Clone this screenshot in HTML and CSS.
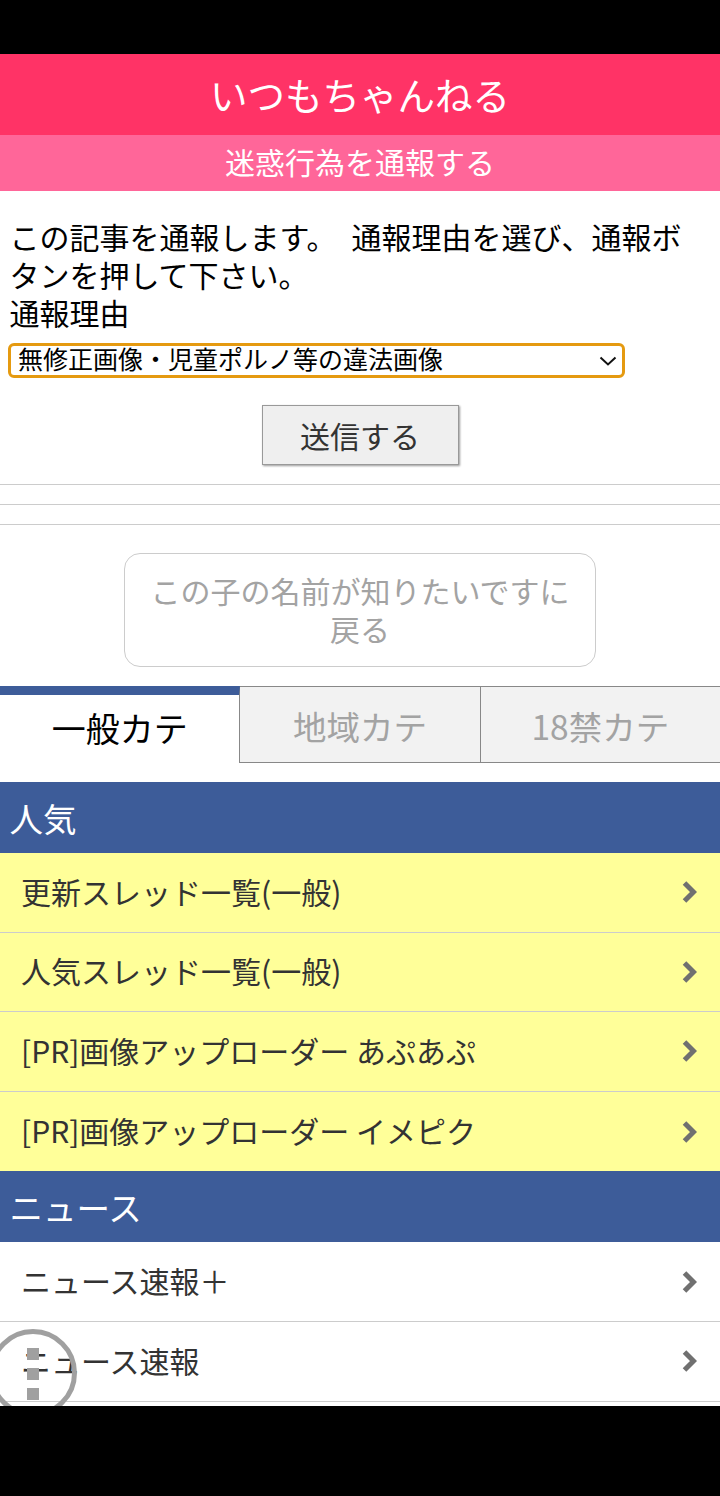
FILE: index.html
```html
<!DOCTYPE html>
<html lang="ja">
<head>
	<title>いつもちゃんねる</title>
	<meta charset="utf-8">
	<meta name="viewport" content="width=device-width, initial-scale=1">
	<link rel="stylesheet" href="styles.css">
</head>
<body>
	<div class="status-bar"></div>
	<div class="screen">
		<h1 class="site-title">いつもちゃんねる</h1>
		<h2 class="page-title">迷惑行為を通報する</h2>
		<form class="report">
			<p>この記事を通報します。　通報理由を選び、通報ボタンを押して下さい。</p>
			<div id="reason-label">通報理由</div>
			<div class="select" role="combobox" aria-labelledby="reason-label">
				<span>無修正画像・児童ポルノ等の違法画像</span>
				<svg class="select-arrow" width="18" height="10" viewBox="0 0 18 10"><path d="M1.5 1.5 9 8.5l7.5-7" fill="none" stroke="#111" stroke-width="2"/></svg>
			</div>
			<div class="submit-row">
				<button type="button">送信する</button>
			</div>
		</form>
		<div class="rules">
			<hr>
			<hr>
			<hr>
		</div>
		<a class="back">この子の名前が知りたいですに戻る</a>
		<div class="tabs">
			<div class="tab active">一般カテ</div>
			<div class="tab">地域カテ</div>
			<div class="tab">18禁カテ</div>
		</div>
		<h3 class="section">人気</h3>
		<ul class="list yellow">
			<li>更新スレッド一覧(一般)<svg class="chev" width="15" height="24" viewBox="0 0 15 24"><path d="M2.5 3l9 9-9 9" fill="none" stroke="#707070" stroke-width="5"/></svg></li>
			<li>人気スレッド一覧(一般)<svg class="chev" width="15" height="24" viewBox="0 0 15 24"><path d="M2.5 3l9 9-9 9" fill="none" stroke="#707070" stroke-width="5"/></svg></li>
			<li>[PR]画像アップローダー あぷあぷ<svg class="chev" width="15" height="24" viewBox="0 0 15 24"><path d="M2.5 3l9 9-9 9" fill="none" stroke="#707070" stroke-width="5"/></svg></li>
			<li>[PR]画像アップローダー イメピク<svg class="chev" width="15" height="24" viewBox="0 0 15 24"><path d="M2.5 3l9 9-9 9" fill="none" stroke="#707070" stroke-width="5"/></svg></li>
		</ul>
		<h3 class="section">ニュース</h3>
		<ul class="list">
			<li>ニュース速報＋<svg class="chev" width="15" height="24" viewBox="0 0 15 24"><path d="M2.5 3l9 9-9 9" fill="none" stroke="#707070" stroke-width="5"/></svg></li>
			<li>ニュース速報<svg class="chev" width="15" height="24" viewBox="0 0 15 24"><path d="M2.5 3l9 9-9 9" fill="none" stroke="#707070" stroke-width="5"/></svg></li>
		</ul>
		<div class="float-menu">
			<span></span>
			<span></span>
			<span></span>
		</div>
	</div>
	<div class="nav-bar"></div>
</body>
</html>
```

FILE: styles.css
```css
* {
	box-sizing: border-box;
}

html, body {
	margin: 0;
	padding: 0;
	height: 100%;
}

body {
	display: flex;
	flex-direction: column;
	background-color: #000;
	font-family: "Noto Sans CJK JP", "Noto Sans", sans-serif;
}

.status-bar {
	height: 54px;
	flex: none;
}

.nav-bar {
	height: 90px;
	flex: none;
}

.screen {
	position: relative;
	flex: 1;
	overflow: hidden;
	background-color: #fff;
}

.site-title {
	margin: 0;
	height: 81px;
	line-height: 80px;
	text-align: center;
	font-size: 37.5px;
	font-weight: 400;
	color: #fff;
	background-color: #ff3366;
}

.page-title {
	margin: 0;
	height: 56px;
	line-height: 53px;
	text-align: center;
	font-size: 30px;
	font-weight: 400;
	color: #fff;
	background-color: #ff6699;
}

.report {
	padding: 26px 9.5px 0;
	font-size: 30px;
	line-height: 38px;
	color: #000;
}

.report p {
	margin: 0;
}

.select {
	display: flex;
	align-items: center;
	justify-content: space-between;
	width: 617px;
	height: 35px;
	margin: 12px 0 0 -1.5px;
	padding: 0 5px 5px 7px;
	border: 3px solid #e59a10;
	border-radius: 6px;
	background-color: #fff;
	font-size: 25px;
	line-height: 26px;
}

.select-arrow {
	flex: none;
	margin-top: 5px;
}

.submit-row {
	display: flex;
	justify-content: center;
	margin-top: 27px;
}

.submit-row button {
	width: 197px;
	height: 60px;
	padding: 0;
	border: 1px solid #999;
	background-color: #efefef;
	box-shadow: 1px 1px 2px rgba(0,0,0,0.4);
	color: #333;
	font-family: inherit;
	font-size: 30px;
}

.rules {
	display: flex;
	flex-direction: column;
	gap: 19px;
	margin-top: 19px;
}

.rules hr {
	margin: 0;
	height: 1px;
	border: none;
	background-color: #ccc;
}

.back {
	display: block;
	width: 472px;
	margin: 28px auto 0;
	padding: 17px 20px 19px;
	border: 1px solid #ccc;
	border-radius: 16px;
	text-align: center;
	font-size: 30px;
	line-height: 38px;
	color: #a3a3a3;
}

.tabs {
	display: flex;
	margin-top: 19px;
	height: 77px;
}

.tab {
	flex: 1;
	display: flex;
	align-items: center;
	justify-content: center;
	padding-top: 2px;
	border: 1px solid #888;
	border-left: none;
	background-color: #f2f2f2;
	font-size: 33.5px;
	color: #a3a3a3;
}

.tab:last-child {
	border-right: none;
}

.tab.active {
	padding: 0 0 4px;
	border: none;
	border-top: 9px solid #3d5c99;
	border-right: 1px solid #888;
	background-color: #fff;
	font-size: 34px;
	color: #000;
}

.section {
	margin: 19px 0 0;
	height: 71px;
	line-height: 71px;
	padding-left: 9.5px;
	font-size: 33.5px;
	font-weight: 400;
	color: #fff;
	background-color: #3d5c99;
}

.list + .section {
	margin-top: 0;
}

.list {
	margin: 0;
	padding: 0;
	list-style: none;
}

.list li {
	display: flex;
	align-items: center;
	justify-content: space-between;
	height: 79.6px;
	padding: 0 23px 3px 21px;
	border-bottom: 1px solid #ccc;
	font-size: 30px;
	color: #333;
}

.list.yellow li {
	background-color: #ffff99;
}

.list.yellow li:last-child {
	border-bottom: none;
}

.chev {
	flex: none;
	margin-top: 3px;
}

.float-menu {
	position: absolute;
	left: -11px;
	top: 1275px;
	width: 88px;
	height: 88px;
	display: flex;
	flex-direction: column;
	align-items: center;
	gap: 8px;
	padding-top: 14px;
	border: 5px solid #a0a0a0;
	border-radius: 50%;
}

.float-menu span {
	width: 12px;
	height: 12px;
	background-color: #a0a0a0;
}
```
